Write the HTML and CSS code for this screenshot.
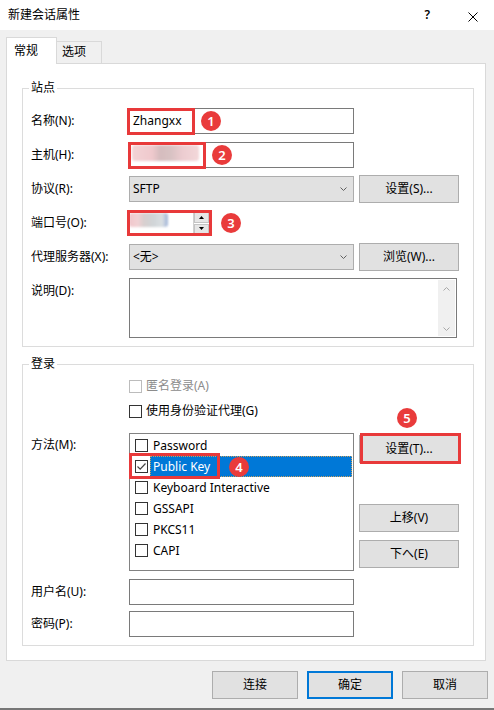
FILE: index.html
```html
<!DOCTYPE html>
<html lang="zh-CN">
<head>
<meta charset="utf-8">
<title>新建会话属性</title>
<link rel="stylesheet" href="styles.css">
</head>
<body>
<div class="window">
  <header class="titlebar">
    <span class="title">新建会话属性</span>
    <span class="help">?</span>
    <svg class="close" width="10" height="10" viewBox="0 0 10 10"><path d="M0.5 0.5L9.5 9.5M9.5 0.5L0.5 9.5" stroke="#000" stroke-width="1" fill="none"/></svg>
  </header>

  <nav class="tabs">
    <div class="tab tab-active">常规</div>
    <div class="tab">选项</div>
  </nav>

  <main class="panel">
    <section class="group">
      <div class="group-title">站点</div>
      <div class="rows rows-site">
        <div class="row">
          <span class="label">名称(N):</span>
          <div class="input field">Zhangxx<span class="mark mark-name"></span><span class="badge badge-1">1</span></div>
        </div>
        <div class="row">
          <span class="label">主机(H):</span>
          <div class="input field"><span class="blob blob-host"></span><span class="mark mark-host"></span><span class="badge badge-2">2</span></div>
        </div>
        <div class="row">
          <span class="label">协议(R):</span>
          <div class="select"><span>SFTP</span><svg width="7" height="4" viewBox="0 0 7 4"><path d="M0.5 0.5L3.5 3.5L6.5 0.5" stroke="#606060" fill="none"/></svg></div>
          <button class="btn side-btn">设置(S)...</button>
        </div>
        <div class="row">
          <span class="label">端口号(O):</span>
          <div class="input spin field">
            <span class="spin-value"></span>
            <span class="spin-arrows">
              <span class="arrow"><svg width="5" height="3" viewBox="0 0 5 3"><path d="M2.5 0L5 3H0Z" fill="#000"/></svg></span>
              <span class="arrow"><svg width="5" height="3" viewBox="0 0 5 3"><path d="M0 0H5L2.5 3Z" fill="#000"/></svg></span>
            </span>
            <span class="blob blob-port"></span><span class="mark mark-port"></span><span class="badge badge-3">3</span>
          </div>
        </div>
        <div class="row">
          <span class="label">代理服务器(X):</span>
          <div class="select"><span>&lt;无&gt;</span><svg width="7" height="4" viewBox="0 0 7 4"><path d="M0.5 0.5L3.5 3.5L6.5 0.5" stroke="#606060" fill="none"/></svg></div>
          <button class="btn side-btn">浏览(W)...</button>
        </div>
        <div class="row row-desc">
          <span class="label">说明(D):</span>
          <div class="textarea">
            <div class="scrollbar">
              <svg width="7" height="4" viewBox="0 0 7 4"><path d="M0.5 3.5L3.5 0.5L6.5 3.5" stroke="#a8a8a8" fill="none"/></svg>
              <svg width="7" height="4" viewBox="0 0 7 4"><path d="M0.5 0.5L3.5 3.5L6.5 0.5" stroke="#a8a8a8" fill="none"/></svg>
            </div>
          </div>
        </div>
      </div>
    </section>

    <section class="group">
      <div class="group-title">登录</div>
      <div class="rows rows-login">
        <div class="check-row">
          <span class="check check-disabled"></span><span class="text-disabled">匿名登录(A)</span>
        </div>
        <div class="check-row check-row-2">
          <span class="check"></span><span>使用身份验证代理(G)</span>
        </div>
        <div class="method-row">
          <span class="label label-method">方法(M):</span>
          <div class="list">
            <div class="item"><span class="check"></span><span class="item-text">Password</span></div>
            <div class="item item-selected"><span class="check"><svg width="11" height="11" viewBox="0 0 11 11"><path d="M1.5 5.5L4.2 8.2L9.5 2.5" stroke="#444" stroke-width="1.2" fill="none"/></svg></span><span class="item-text">Public Key</span><span class="mark mark-pk"></span><span class="badge badge-4">4</span></div>
            <div class="item"><span class="check"></span><span class="item-text">Keyboard Interactive</span></div>
            <div class="item"><span class="check"></span><span class="item-text">GSSAPI</span></div>
            <div class="item"><span class="check"></span><span class="item-text">PKCS11</span></div>
            <div class="item"><span class="check"></span><span class="item-text">CAPI</span></div>
          </div>
          <div class="side-col">
            <div class="btn-wrap"><button class="btn side-col-btn">设置(T)...</button><span class="mark mark-t"></span><span class="badge badge-5">5</span></div>
            <button class="btn side-col-btn btn-up">上移(V)</button>
            <button class="btn side-col-btn btn-down">下へ(E)</button>
          </div>
        </div>
        <div class="row row-user">
          <span class="label">用户名(U):</span>
          <div class="input"></div>
        </div>
        <div class="row row-pass">
          <span class="label">密码(P):</span>
          <div class="input"></div>
        </div>
      </div>
    </section>
  </main>

  <footer class="footer">
    <button class="btn foot-btn">连接</button>
    <button class="btn foot-btn btn-default">确定</button>
    <button class="btn foot-btn">取消</button>
  </footer>
</div>
</body>
</html>
```

FILE: styles.css
```css
* { box-sizing: border-box; }
html, body { margin: 0; padding: 0; }
body {
  width: 494px;
  height: 710px;
  overflow: hidden;
  background: #f0f0f0;
  font-family: "Noto Sans", "Noto Sans CJK SC", sans-serif;
  font-size: 12px;
  line-height: 16px;
  color: #000;
}
.window {
  height: 710px;
  border-bottom: 2px solid #777;
  display: flex;
  flex-direction: column;
}

/* title bar */
.titlebar {
  flex: none;
  height: 30px;
  background: #fff;
  display: flex;
  align-items: center;
  padding-left: 8px;
}
.help { margin-left: auto; margin-right: 38px; font-weight: 600; }
.close { margin-right: 16px; margin-top: 3px; }

/* tabs */
.tabs {
  flex: none;
  height: 26px;
  margin-top: 7px;
  padding-left: 6px;
  display: flex;
  align-items: flex-end;
}
.tab {
  width: 45px;
  height: 22px;
  border: 1px solid #d9d9d9;
  border-left: none;
  border-bottom: none;
  background: #f0f0f0;
  padding: 2px 0 0 5px;
}
.tab-active {
  width: 51px;
  height: 27px;
  margin-bottom: -1px;
  border-left: 1px solid #d9d9d9;
  background: #fff;
  padding: 5px 0 0 7px;
  position: relative;
  z-index: 1;
}

/* panel */
.panel {
  flex: none;
  margin: 0 8px 0 6px;
  background: #fff;
  border: 1px solid #d9d9d9;
  padding: 24px 0 14px 15px;
}
.group {
  width: 452px;
  border: 1px solid #dcdcdc;
  padding: 0 0 8px 8px;
}
.group + .group { margin-top: 17px; }
.group-title {
  width: fit-content;
  height: 16px;
  margin: -9px 0 0 -2px;
  padding: 0 2px;
  background: #fff;
}
.rows-site { margin-top: 12px; }
.rows-login { margin-top: 6px; }

.row { display: flex; align-items: center; height: 26px; }
.row + .row { margin-top: 8px; }
.label { width: 98px; flex: none; }

.input {
  flex: none;
  width: 225px;
  height: 26px;
  border: 1px solid #7a7a7a;
  background: #fff;
  padding: 4px 0 0 3px;
}
.field { position: relative; }

.select {
  flex: none;
  width: 225px;
  height: 26px;
  border: 1px solid #adadad;
  background: #e1e1e1;
  display: flex;
  align-items: center;
  justify-content: space-between;
  padding: 0 6px 0 3px;
}

.btn {
  height: 28px;
  border: 1px solid #adadad;
  background: #e1e1e1;
  display: flex;
  align-items: center;
  justify-content: center;
  padding: 0;
  font: inherit;
  color: #000;
  flex: none;
}
.side-btn { width: 100px; margin: -1px 0 -1px 5px; }

/* spin */
.spin { width: 81px; padding: 0; display: flex; }
.spin-value { flex: 1; }
.spin-arrows {
  width: 16px;
  display: flex;
  flex-direction: column;
  padding: 1px 0;
  border-left: 1px solid #d0d0d0;
}
.arrow {
  flex: 1;
  display: flex;
  align-items: center;
  justify-content: center;
  background: #e6e6e6;
  border: 1px solid #c4c4c4;
}
.arrow + .arrow { margin-top: 1px; }

/* textarea */
.row-desc { height: 60px; align-items: flex-start; }
.row-desc .label { margin-top: 5px; }
.textarea {
  width: 328px;
  height: 60px;
  border: 1px solid #7a7a7a;
  background: #fff;
  padding: 1px;
  display: flex;
  justify-content: flex-end;
}
.scrollbar {
  width: 17px;
  background: #f0f0f0;
  display: flex;
  flex-direction: column;
  justify-content: space-between;
  align-items: center;
  padding: 7px 0 5px;
}

/* checkboxes */
.check-row { height: 16px; display: flex; align-items: center; padding-left: 98px; }
.check-row-2 { margin-top: 9px; }
.check {
  flex: none;
  width: 13px;
  height: 13px;
  border: 1px solid #333;
  background: #fff;
  margin-right: 4px;
  display: flex;
  align-items: center;
  justify-content: center;
}
.check-disabled { border-color: #bcbcbc; }
.text-disabled { color: #8c8c8c; }

/* method list */
.method-row { display: flex; align-items: flex-start; margin-top: 14px; }
.label-method { margin-top: 4px; }
.list {
  flex: none;
  width: 225px;
  height: 138px;
  border: 1px solid #828282;
  background: #fff;
  padding-top: 1px;
}
.item { position: relative; display: flex; align-items: center; height: 21px; }
.item .check { margin: 0 0 0 5px; }
.item-text { height: 21px; display: flex; align-items: center; margin-left: 5px; }
.item-selected .item-text {
  flex: 1;
  margin: 0 1px 0 2px;
  padding-left: 3px;
  background: #0078d7;
  color: #fff;
  outline: 1px dotted #c9a060;
  outline-offset: -1px;
}
.side-col { display: flex; flex-direction: column; margin-left: 5px; }
.btn-wrap { position: relative; margin-top: 2px; }
.side-col-btn { width: 100px; }
.btn-up { margin-top: 41px; }
.btn-down { margin-top: 8px; }

.row-user { margin-top: 8px; }
.row.row-pass { margin-top: 6px; }

/* footer */
.footer {
  flex: none;
  display: flex;
  justify-content: flex-end;
  gap: 9px;
  padding-right: 6px;
  margin-top: 10px;
}
.foot-btn { width: 86px; }
.btn-default { border: 2px solid #0078d7; }

/* annotations (overlays) */
.mark { position: absolute; border: 3px solid #e8393a; }
.badge {
  position: absolute;
  width: 20px;
  height: 20px;
  border-radius: 50%;
  background: #e93b3b;
  color: #fff;
  font-size: 13px;
  font-weight: 600;
  line-height: 1;
  display: flex;
  align-items: center;
  justify-content: center;
  z-index: 2;
}
.mark-name { left: -3px; top: -1px; width: 68px; height: 27px; }
.badge-1 { left: 71px; top: 2px; }
.mark-host { left: -2px; top: -1px; width: 78px; height: 27px; }
.badge-2 { left: 82px; top: 2px; }
.mark-port { left: -3px; top: -1px; width: 85px; height: 26px; }
.badge-3 { left: 91px; top: 2px; }
.mark-pk { left: -1px; top: -3px; width: 91px; height: 26px; }
.badge-4 { left: 99px; top: 1px; }
.mark-t { left: 1px; top: -2px; width: 101px; height: 31px; }
.badge-5 { left: 38px; top: -27px; }

.blob { position: absolute; filter: blur(1px); border-radius: 3px; }
.blob-host {
  left: 2px; top: 2px; width: 67px; height: 16px;
  background: linear-gradient(90deg, #f3d3d6 0%, #efc9cd 30%, #d5bcbe 42%, #d8c2c3 58%, #ecccd0 75%, #f3d8da 100%);
}
.blob-port {
  left: -1px; top: 2px; width: 39px; height: 14px;
  background: linear-gradient(90deg, #f0c6cb 0%, #f2d2d5 22%, #d8cfcf 38%, #d0d5d8 62%, #dadfe2 85%, #9fb3d8 100%);
}
```
